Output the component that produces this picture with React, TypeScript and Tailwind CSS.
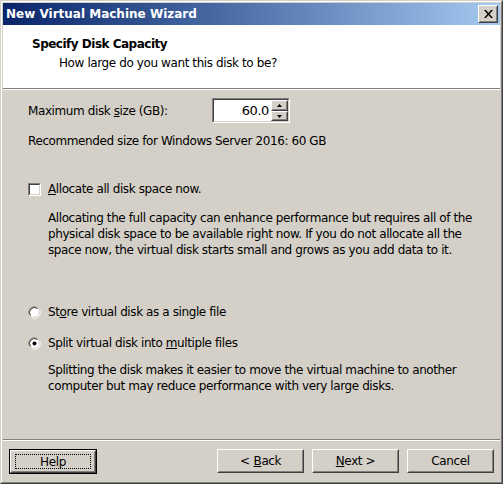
const face = "font-['DejaVu_Sans',sans-serif]";

function Raised({ children, className = "" }: { children?: React.ReactNode; className?: string }) {
  return (
    <div className={`border border-t-white border-l-white border-r-[#404040] border-b-[#404040] bg-[#D4D0C8] ${className}`}>
      <div className="flex h-full w-full items-center justify-center border border-t-[#D4D0C8] border-l-[#D4D0C8] border-r-[#808080] border-b-[#808080]">
        {children}
      </div>
    </div>
  );
}

function Checkbox() {
  return (
    <div className="h-[13px] w-[13px] shrink-0 border border-t-[#808080] border-l-[#808080] border-r-white border-b-white">
      <div className="h-full w-full border border-t-[#404040] border-l-[#404040] border-r-[#D4D0C8] border-b-[#D4D0C8] bg-white" />
    </div>
  );
}

function Radio({ checked }: { checked?: boolean }) {
  return (
    <svg width="13" height="13" viewBox="0 0 13 13" className="shrink-0">
      <path d="M1.5 9 A5.5 5.5 0 0 1 9 1.5" stroke="#808080" fill="none" strokeWidth="1" />
      <circle cx="6.5" cy="6.5" r="5" fill="white" />
      <path d="M12 4.5 A6 6 0 0 1 4.5 12" stroke="#ffffff" fill="none" strokeWidth="1" />
      <path d="M2.5 9.5 A5 5 0 0 1 9.5 2.5" stroke="#404040" fill="none" strokeWidth="1" />
      <path d="M11 5 A5 5 0 0 1 5 11" stroke="#D4D0C8" fill="none" strokeWidth="1" />
      {checked && <circle cx="6.5" cy="6.5" r="2" fill="black" />}
    </svg>
  );
}

function Tri({ up }: { up?: boolean }) {
  return (
    <svg width="5" height="3" viewBox="0 0 5 3">
      <path d={up ? "M2.5 0 L5 3 L0 3 Z" : "M0 0 L5 0 L2.5 3 Z"} fill="black" />
    </svg>
  );
}

export default function App() {
  return (
    <div className={`${face} h-[484px] w-[503px] border border-t-[#D4D0C8] border-l-[#D4D0C8] border-r-[#404040] border-b-[#404040] bg-[#D4D0C8] text-[12px] tracking-[-0.4px] text-black`}>
      <div className="flex h-full flex-col border border-t-white border-l-white border-r-[#808080] border-b-[#808080] p-[1px]">
        {/* Title bar */}
        <div className="flex h-[22px] items-center justify-between bg-gradient-to-r from-[#0A246A] to-[#A6CAF0] pl-[3px] pr-[2px]">
          <span className="text-[12px] font-bold tracking-normal text-white">New Virtual Machine Wizard</span>
          <Raised className="h-[18px] w-[20px]">
            <svg width="9" height="8" viewBox="0 0 9 8">
              <path d="M0 0h2l2.5 3 2.5-3h2L5.5 4 9 8H7L4.5 5 2 8H0l3.5-4z" fill="black" />
            </svg>
          </Raised>
        </div>

        {/* Header */}
        <div className="h-[64px] border-b border-b-[#808080] bg-white pl-[29px] pt-[11px]">
          <div className="text-[12px] font-bold leading-[16px] tracking-[-0.5px]">Specify Disk Capacity</div>
          <div className="mt-[3px] pl-[27px] leading-[16px]">How large do you want this disk to be?</div>
        </div>

        {/* Body */}
        <div className="flex flex-1 flex-col border-t border-t-white px-[25px]">
          <div className="mt-[8px] flex h-[25px] items-center">
            <span className="w-[184px]">
              Maximum disk <u>s</u>ize (GB):
            </span>
            <div className="flex h-[25px] w-[78px] border border-t-[#808080] border-l-[#808080] border-r-white border-b-white">
              <div className="flex flex-1 items-center border border-t-[#404040] border-l-[#404040] border-r-[#D4D0C8] border-b-[#D4D0C8] bg-white">
                <span className="flex-1 pr-[2px] text-right text-[13px]">60.0</span>
                <div className="flex w-[17px] flex-col">
                  <Raised className="h-[11px]">
                    <Tri up />
                  </Raised>
                  <Raised className="h-[10px]">
                    <Tri />
                  </Raised>
                </div>
              </div>
            </div>
          </div>

          <div className="mt-[10px] leading-[16px]">Recommended size for Windows Server 2016: 60 GB</div>

          <div className="mt-[32px] flex items-center gap-[7px]">
            <Checkbox />
            <span className="leading-[16px]">
              <u>A</u>llocate all disk space now.
            </span>
          </div>
          <p className="mt-[13px] whitespace-nowrap pl-[20px] leading-[16px]">
            Allocating the full capacity can enhance performance but requires all of the
            <br />
            physical disk space to be available right now. If you do not allocate all the
            <br />
            space now, the virtual disk starts small and grows as you add data to it.
          </p>

          <div className="mt-[46px] flex items-center gap-[7px]">
            <Radio />
            <span className="leading-[16px]">
              St<u>o</u>re virtual disk as a single file
            </span>
          </div>
          <div className="mt-[15px] flex items-center gap-[7px]">
            <Radio checked />
            <span className="leading-[16px]">
              Split virtual disk into <u>m</u>ultiple files
            </span>
          </div>
          <p className="mt-[11px] whitespace-nowrap pl-[20px] leading-[16px]">
            Splitting the disk makes it easier to move the virtual machine to another
            <br />
            computer but may reduce performance with very large disks.
          </p>
        </div>

        {/* Footer */}
        <div className="border-t border-t-[#808080]">
          <div className="flex h-[41px] items-start border-t border-t-white px-[6px] pt-[8px]">
            <div className="h-[25px] w-[88px] border border-black">
              <Raised className="h-full w-full">
                <div className="flex h-[15px] w-[76px] items-center justify-center border border-dotted border-black">Help</div>
              </Raised>
            </div>
            <div className="ml-auto flex gap-[8px]">
              <Raised className="h-[24px] w-[87px]">
                &lt; <u className="ml-[4px]">B</u>ack
              </Raised>
              <Raised className="h-[24px] w-[87px]">
                <u>N</u>ext &gt;
              </Raised>
              <Raised className="h-[24px] w-[87px]">Cancel</Raised>
            </div>
          </div>
        </div>
      </div>
    </div>
  );
}
